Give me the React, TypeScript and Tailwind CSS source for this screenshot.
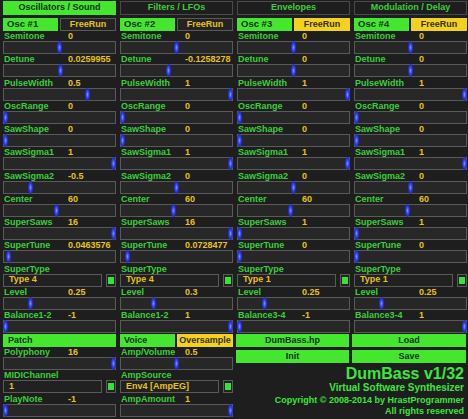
type Row =
  | { kind: 'slider'; label: string; value?: string; f: number }
  | { kind: 'select'; label: string; value: string }

type Column = {
  title: string
  active: boolean
  osc: string
  freeRun: boolean
  rows: Row[]
}

const oscRows = (v: {
  detune: string
  detuneF: number
  pw: string
  pwF: number
  sigma2: string
  sigma2F: number
  saws: string
  sawsF: number
  tune: string
  tuneF: number
  type: string
  level: string
  levelF: number
  balLabel: string
  bal: string
  balF: number
}): Row[] => [
  { kind: 'slider', label: 'Semitone', value: '0', f: 0.5 },
  { kind: 'slider', label: 'Detune', value: v.detune, f: v.detuneF },
  { kind: 'slider', label: 'PulseWidth', value: v.pw, f: v.pwF },
  { kind: 'slider', label: 'OscRange', value: '0', f: 0 },
  { kind: 'slider', label: 'SawShape', value: '0', f: 0 },
  { kind: 'slider', label: 'SawSigma1', value: '1', f: 1 },
  { kind: 'slider', label: 'SawSigma2', value: v.sigma2, f: v.sigma2F },
  { kind: 'slider', label: 'Center', value: '60', f: 0.475 },
  { kind: 'slider', label: 'SuperSaws', value: v.saws, f: v.sawsF },
  { kind: 'slider', label: 'SuperTune', value: v.tune, f: v.tuneF },
  { kind: 'select', label: 'SuperType', value: v.type },
  { kind: 'slider', label: 'Level', value: v.level, f: v.levelF },
  { kind: 'slider', label: v.balLabel, value: v.bal, f: v.balF },
]

const columns: Column[] = [
  {
    title: 'Oscillators / Sound',
    active: true,
    osc: 'Osc #1',
    freeRun: false,
    rows: oscRows({
      detune: '0.0259955', detuneF: 0.513, pw: '0.5', pwF: 0.76, sigma2: '-0.5', sigma2F: 0.236,
      saws: '16', sawsF: 1, tune: '0.0463576', tuneF: 0.025, type: 'Type 4',
      level: '0.25', levelF: 0.236, balLabel: 'Balance1-2', bal: '-1', balF: 0,
    }),
  },
  {
    title: 'Filters / LFOs',
    active: false,
    osc: 'Osc #2',
    freeRun: false,
    rows: oscRows({
      detune: '-0.1258278', detuneF: 0.43, pw: '1', pwF: 1, sigma2: '0', sigma2F: 0.5,
      saws: '16', sawsF: 1, tune: '0.0728477', tuneF: 0.05, type: 'Type 4',
      level: '0.3', levelF: 0.29, balLabel: 'Balance1-2', bal: '1', balF: 1,
    }),
  },
  {
    title: 'Envelopes',
    active: false,
    osc: 'Osc #3',
    freeRun: true,
    rows: oscRows({
      detune: '0', detuneF: 0.5, pw: '1', pwF: 1, sigma2: '0', sigma2F: 0.5,
      saws: '1', sawsF: 0, tune: '0', tuneF: 0, type: 'Type 1',
      level: '0.25', levelF: 0.236, balLabel: 'Balance3-4', bal: '-1', balF: 0,
    }),
  },
  {
    title: 'Modulation / Delay',
    active: false,
    osc: 'Osc #4',
    freeRun: true,
    rows: oscRows({
      detune: '0', detuneF: 0.5, pw: '1', pwF: 1, sigma2: '0', sigma2F: 0.5,
      saws: '1', sawsF: 0, tune: '0', tuneF: 0, type: 'Type 1',
      level: '0.25', levelF: 0.236, balLabel: 'Balance3-4', bal: '1', balF: 1,
    }),
  },
]

function Label({ label, value }: { label: string; value?: string }) {
  return (
    <div className="flex h-[10px] shrink-0 text-[9px] leading-[10px] font-bold whitespace-nowrap">
      <span className="w-[68px] pl-[4px] text-[#3ccf3c]">{label}</span>
      {value && <span className="text-[#e8c31c]">{value}</span>}
    </div>
  )
}

function Slider({ f }: { f: number }) {
  return (
    <div className="relative ml-[3px] h-[13px] w-[113px] shrink-0 border border-[#5a5a5a] bg-[#272727]">
      <div
        className="absolute top-[-1px] h-[13px] w-[5px] rounded-[50%] bg-[radial-gradient(ellipse_at_center,#7d92ff_0%,#2a36f0_45%,#1018b0_100%)]"
        style={{ left: f * 108 - 1 }}
      />
    </div>
  )
}

function Select({ value }: { value: string }) {
  return (
    <div className="ml-[3px] flex h-[13px] w-[113px] shrink-0 gap-[4px]">
      <div className="flex h-full w-[99px] items-center border border-[#5a5a5a] bg-[#212121] pl-[5px] text-[9px] font-bold text-[#e8c31c]">
        {value}
      </div>
      <div className="flex h-full w-[10px] items-center justify-center border border-[#5a5a5a] bg-[#212121]">
        <div className="h-[7px] w-[6px] bg-[#36e436]" />
      </div>
    </div>
  )
}

function Pair({ row, tall }: { row: Row; tall?: boolean }) {
  return (
    <div className={`flex flex-col ${tall ? 'h-[23.5px]' : 'h-[23.27px]'}`}>
      {row.kind === 'slider' ? (
        <>
          <Label label={row.label} value={row.value} />
          <Slider f={row.f} />
        </>
      ) : (
        <>
          <Label label={row.label} />
          <Select value={row.value} />
        </>
      )}
    </div>
  )
}

function GreenButton({ children, className = '' }: { children: React.ReactNode; className?: string }) {
  return (
    <div className={`flex h-[13px] items-center justify-center bg-[#44e62e] text-[9px] font-bold text-[#123012] ${className}`}>
      {children}
    </div>
  )
}

export default function App() {
  return (
    <div className="h-[419px] w-[468px] overflow-hidden bg-[#1e1e1e] pt-[1px] font-['Liberation_Sans',Arial,sans-serif]">
      <div className="grid grid-cols-[117px_117px_117px_117px]">
        {columns.map((col) => (
          <div key={col.title} className="flex flex-col">
            <div
              className={`ml-[3px] flex h-[14px] w-[113px] items-center justify-center border text-[9px] font-bold ${
                col.active
                  ? 'border-[#44e62e] bg-[#44e62e] text-[#123012]'
                  : 'border-[#4a4a4a] bg-[#1e1e1e] text-[#3ccf3c]'
              }`}
            >
              {col.title}
            </div>
            <div className="mt-[3px] ml-[3px] flex h-[13px] w-[113px] gap-[2px]">
              <div className="flex w-[55px] items-center bg-[#44e62e] pl-[4px] text-[9.5px] font-bold text-[#123012]">
                {col.osc}
              </div>
              <div
                className={`flex flex-1 items-center justify-center border text-[9px] font-bold ${
                  col.freeRun
                    ? 'border-[#f2d21e] bg-[#f2d21e] text-[#3a3000]'
                    : 'border-[#5a5a5a] bg-[#232323] text-[#e8c31c]'
                }`}
              >
                FreeRun
              </div>
            </div>
            {col.rows.map((r) => (
              <Pair key={r.label} row={r} />
            ))}
          </div>
        ))}
      </div>

      <div className="grid grid-cols-[117px_117px_234px] pt-[0.5px]">
        {/* Patch */}
        <div className="flex flex-col">
          <div className="ml-[3px] flex h-[13px] w-[113px] items-center bg-[#44e62e] pl-[5px] text-[9px] font-bold text-[#123012]">
            Patch
          </div>
          <Pair tall row={{ kind: 'slider', label: 'Polyphony', value: '16', f: 1 }} />
          <Pair tall row={{ kind: 'select', label: 'MIDIChannel', value: '1' }} />
          <Pair tall row={{ kind: 'slider', label: 'PlayNote', value: '-1', f: 0 }} />
        </div>

        {/* Voice */}
        <div className="flex flex-col">
          <div className="ml-[3px] flex h-[13px] w-[113px] gap-[2px]">
            <div className="flex w-[55px] items-center bg-[#44e62e] pl-[4px] text-[9px] font-bold text-[#123012]">
              Voice
            </div>
            <div className="flex flex-1 items-center justify-center bg-[#f2d21e] text-[9px] font-bold text-[#3a3000]">
              Oversample
            </div>
          </div>
          <Pair tall row={{ kind: 'slider', label: 'Amp/Volume', value: '0.5', f: 0.5 }} />
          <Pair tall row={{ kind: 'select', label: 'AmpSource', value: 'Env4 [AmpEG]' }} />
          <Pair tall row={{ kind: 'slider', label: 'AmpAmount', value: '1', f: 1 }} />
        </div>

        {/* Patch file + about */}
        <div className="flex flex-col">
          <div className="grid grid-cols-[117px_117px] gap-y-[3px]">
            <GreenButton className="ml-[2px] w-[113px]">DumBass.hp</GreenButton>
            <GreenButton className="ml-[1px] w-[114px]">Load</GreenButton>
            <GreenButton className="ml-[2px] w-[113px]">Init</GreenButton>
            <GreenButton className="ml-[1px] w-[114px]">Save</GreenButton>
          </div>
          <div className="flex flex-col items-end pr-[4px] font-bold whitespace-nowrap text-[#3ce63c]">
            <div className="mt-[3px] h-[16px] text-[16px] leading-[16px]">DumBass v1/32</div>
            <div className="mt-[1px] h-[10px] text-[10px] leading-[10px]">Virtual Software Synthesizer</div>
            <div className="mt-[3px] h-[9px] text-[9px] leading-[9px]">Copyright © 2008-2014 by HrastProgrammer</div>
            <div className="mt-[2px] h-[9px] text-[9px] leading-[9px]">All rights reserved</div>
          </div>
        </div>
      </div>
    </div>
  )
}
